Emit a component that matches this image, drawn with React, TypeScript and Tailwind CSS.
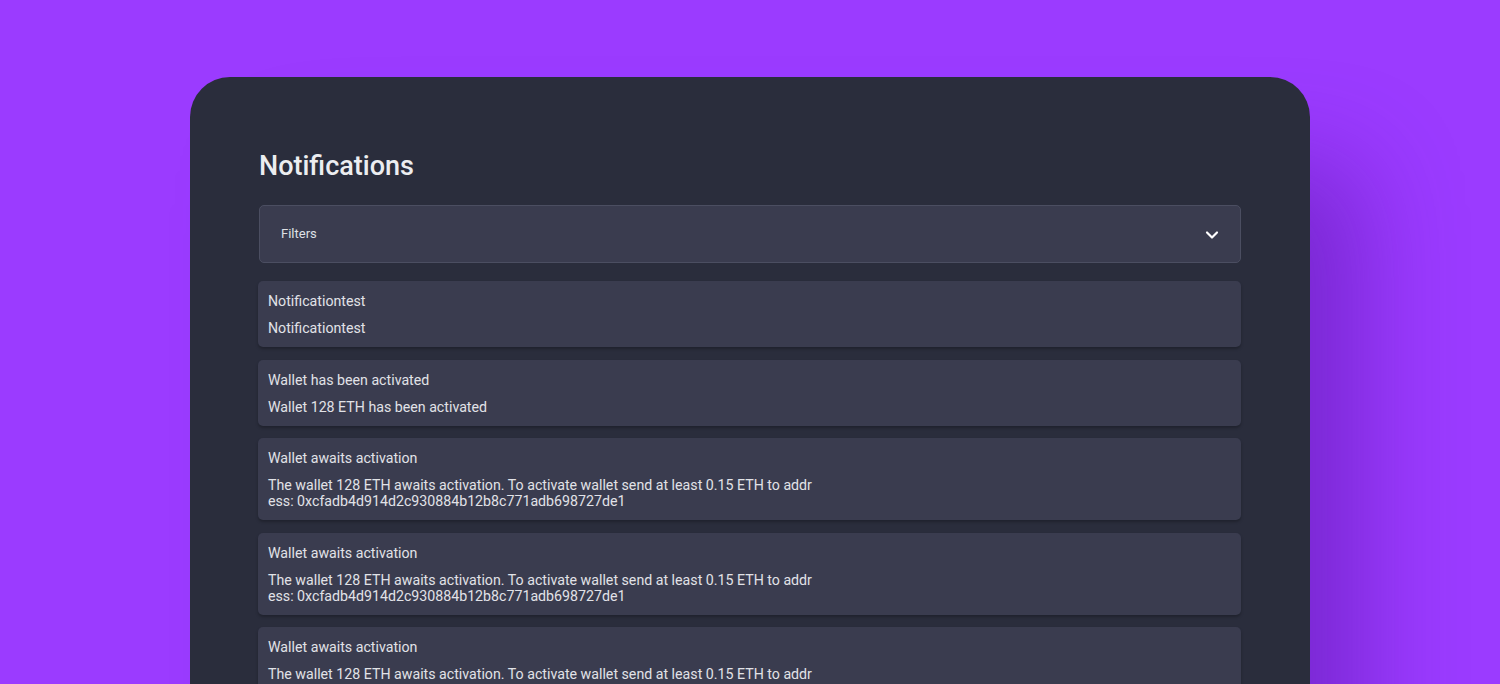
import React from "react";
import { ChevronDown } from "lucide-react";

type Notice = {
  id: number;
  title: string;
  body: string;
};

const address = "0xcfadb4d914d2c930884b12b8c771adb698727de1";

const notices: Notice[] = [
  { id: 1, title: "Notificationtest", body: "Notificationtest" },
  { id: 2, title: "Wallet has been activated", body: "Wallet 128 ETH has been activated" },
  {
    id: 3,
    title: "Wallet awaits activation",
    body: `The wallet 128 ETH awaits activation. To activate wallet send at least 0.15 ETH to address: ${address}`,
  },
  {
    id: 4,
    title: "Wallet awaits activation",
    body: `The wallet 128 ETH awaits activation. To activate wallet send at least 0.15 ETH to address: ${address}`,
  },
  {
    id: 5,
    title: "Wallet awaits activation",
    body: `The wallet 128 ETH awaits activation. To activate wallet send at least 0.15 ETH to address: ${address}`,
  },
];

const App = () => {
  return (
    <div className="h-[684px] overflow-hidden bg-[#9b3bff] pt-[77px] font-['Roboto','Liberation_Sans',sans-serif]">
      <div className="mx-auto w-[1120px] min-h-[700px] rounded-[40px] bg-[#2a2d3c] px-[69px] pt-[74px] shadow-[70px_70px_100px_-20px_rgba(70,10,140,0.4)]">
        <h1 className="text-[27px] leading-[30px] font-medium text-[#ecedf0]">Notifications</h1>

        <button className="mt-[24px] flex h-[58px] w-full items-center justify-between rounded-[5px] border border-[#4b4e61] bg-[#3a3c4f] pl-[21px] pr-[18px] text-left">
          <span className="text-[13px] text-[#dfe0e5]">Filters</span>
          <ChevronDown size={20} strokeWidth={2.6} className="mt-[1px] text-white" />
        </button>

        <div className="mt-[18px] flex flex-col gap-[12.5px]">
          {notices.map((n) => (
            <div
              key={n.id}
              className="-ml-px rounded-[5px] bg-[#3a3c4f] px-[10px] pt-[10px] pb-[11px] shadow-[0_2px_3px_rgba(0,0,0,0.25)]"
            >
              <p className="text-[14.2px] leading-[20px] text-[#e1e2e7]">{n.title}</p>
              <p className="mt-[9px] max-w-[549px] break-all text-[14.2px] leading-[16px] text-[#e1e2e7]">
                {n.body}
              </p>
            </div>
          ))}
        </div>
      </div>
    </div>
  );
};

export default App;
